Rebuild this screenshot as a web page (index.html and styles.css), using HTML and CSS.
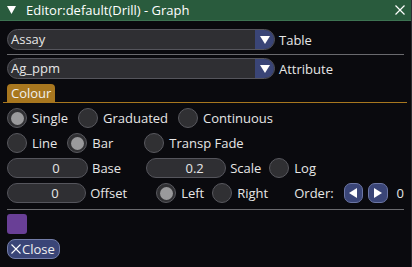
FILE: index.html
```html
<!DOCTYPE html>
<html lang="en">
<head>
  <meta charset="UTF-8">
  <meta name="viewport" content="width=device-width,initial-scale=1.0">
  <title>Editor:default(Drill) - Graph</title>
  <link rel="stylesheet" href="styles.css">
</head>
<body>
  <div class="window">
    <div class="titlebar">
      <svg class="collapse" width="9" height="8" viewBox="0 0 9 8"><path d="M0 0H9L4.5 8Z" fill="#fff"/></svg>
      <span class="title">Editor:default(Drill) - Graph</span>
      <svg class="close-x" width="10" height="10" viewBox="0 0 10 10"><path d="M0.5 0.5L9.5 9.5M9.5 0.5L0.5 9.5" stroke="#fff" stroke-width="1.2"/></svg>
    </div>

    <div class="content">
      <div class="row">
        <div class="combo">
          <span class="combo-text">Assay</span>
          <span class="combo-arrow"><svg width="10" height="8" viewBox="0 0 10 8"><path d="M0 0H10L5 8Z" fill="#fff"/></svg></span>
        </div>
        <span class="lbl">Table</span>
      </div>
      <div class="sep first"></div>
      <div class="row">
        <div class="combo">
          <span class="combo-text">Ag_ppm</span>
          <span class="combo-arrow"><svg width="10" height="8" viewBox="0 0 10 8"><path d="M0 0H10L5 8Z" fill="#fff"/></svg></span>
        </div>
        <span class="lbl">Attribute</span>
      </div>

      <div class="tabbar"><span class="tab">Colour</span></div>

      <div class="row r1">
        <span class="opt"><i class="radio on"></i>Single</span>
        <span class="opt"><i class="radio"></i>Graduated</span>
        <span class="opt"><i class="radio"></i>Continuous</span>
      </div>

      <div class="row">
        <span class="opt"><i class="radio"></i>Line</span>
        <span class="opt bar"><i class="radio on"></i>Bar</span>
        <span class="opt fade"><i class="radio"></i>Transp Fade</span>
      </div>

      <div class="row">
        <span class="field">0</span><span class="lbl">Base</span>
        <span class="field scale">0.2</span><span class="lbl">Scale</span>
        <span class="opt log"><i class="radio"></i>Log</span>
      </div>

      <div class="row">
        <span class="field">0</span><span class="lbl">Offset</span>
        <span class="opt left"><i class="radio on"></i>Left</span>
        <span class="opt right"><i class="radio"></i>Right</span>
        <span class="order">Order:</span>
        <span class="arrow-btn first"><svg width="8" height="10" viewBox="0 0 8 10"><path d="M8 0V10L0 5Z" fill="#fff"/></svg></span>
        <span class="arrow-btn"><svg width="8" height="10" viewBox="0 0 8 10"><path d="M0 0V10L8 5Z" fill="#fff"/></svg></span>
        <span class="order-val">0</span>
      </div>

      <div class="sep second"></div>

      <div class="swatch"></div>

      <div class="close-btn">
        <svg width="10" height="10" viewBox="0 0 10 10"><path d="M0.5 0.5L9.5 9.5M9.5 0.5L0.5 9.5" stroke="#fff" stroke-width="1.1"/></svg>Close
      </div>
    </div>
  </div>
</body>
</html>
```

FILE: styles.css
```css
body { margin:0; padding:0; background:#0a0a0e; font-family:"Open Sans",sans-serif; font-size:13px; color:#e6e6e6; }
.window { width:412px; height:267px; background:#0a0a0e; box-sizing:border-box; border-right:1px solid #2c2c34; overflow:hidden; }

.titlebar { height:20px; background:#295b3d; border-bottom:1px solid #3d7352; display:flex; align-items:center; color:#fff; }
.collapse { margin-left:7px; }
.title { margin-left:10px; flex:1; line-height:20px; }
.close-x { margin-right:6px; }

.content { padding:8px 7px 0 7px; }
.row { display:flex; align-items:center; height:20px; margin-top:5px; white-space:nowrap; }
.row:first-child { margin-top:0; height:21px; }

.combo { width:268px; height:21px; box-sizing:border-box; border:1px solid #55555c; border-radius:11px;
         background:#2f2f33; display:flex; overflow:hidden; }
.combo-text { flex:1; padding-left:3px; line-height:19px; }
.combo-arrow { width:19px; background:#3a4577; display:flex; align-items:center; justify-content:center; }
.lbl { margin-left:4px; }

.sep { height:1px; background:#6a6a6e; margin-right:0; }
.sep.first { margin-top:4px; }
.sep.first + .row { margin-top:3px; height:21px; }
.sep.second { margin-top:6px; }

.tabbar { margin:5px -3px 0 -4px; border-bottom:1px solid #a8771f; padding-left:4px; height:18px; }
.tab { display:inline-block; height:18px; line-height:18px; padding:0 4px; background:#a8771f; border-radius:4px 4px 0 0; color:#f0f0f0; }
.tabbar + .row { margin-top:5px; }

.opt { display:flex; align-items:center; }
.radio { width:20px; height:20px; box-sizing:border-box; border-radius:50%; background:#303033; border:1px solid #58585e;
         margin-right:5px; display:flex; align-items:center; justify-content:center; }
.radio.on::after { content:""; width:13px; height:13px; border-radius:50%; background:#9a9a9c; }
.r1 { gap:10px; }
.bar { margin-left:10px; }
.fade { margin-left:31px; }

.field { width:81px; height:20px; box-sizing:border-box; border:1px solid #55555c; border-radius:10px; background:#2f2f33;
         text-align:center; line-height:18px; padding-left:17px; }
.field.scale { margin-left:25px; width:80px; }
.log { margin-left:8px; }
.left { margin-left:29px; }
.right { margin-left:8px; }
.order { margin-left:26px; }
.arrow-btn { width:20px; height:20px; box-sizing:border-box; border-radius:7px; background:#3a4577; border:1px solid #6c76a4;
             display:flex; align-items:center; justify-content:center; margin-left:5px; }
.arrow-btn.first { margin-left:10px; }
.order-val { margin-left:9px; }

.swatch { width:20px; height:20px; margin-top:4px; border-radius:3px; background:#693f96; }

.close-btn { display:inline-flex; align-items:center; gap:1px; margin-top:5px; height:20px; box-sizing:border-box; padding:0 4px 0 3px;
             background:#3a4577; border:1px solid #727ca8; border-radius:8px; color:#f0f0f0; }
```
